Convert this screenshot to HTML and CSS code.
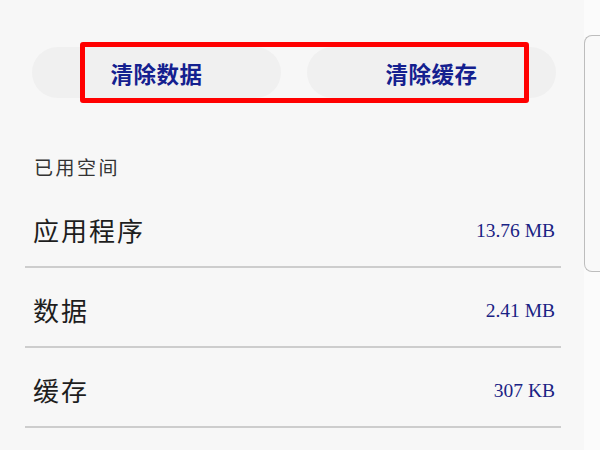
FILE: index.html
```html
<!DOCTYPE html>
<html lang="zh-CN">
<head>
<meta charset="utf-8">
<title>存储</title>
<link rel="stylesheet" href="styles.css">
</head>
<body>
<div class="screen">
  <main class="content">
    <div class="actions">
      <button class="pill">清除数据</button>
      <button class="pill">清除缓存</button>
      <div class="highlight"></div>
    </div>
    <div class="section-title">已用空间</div>
    <ul class="list">
      <li class="row"><span class="label">应用程序</span><span class="value">13.76 MB</span></li>
      <li class="row"><span class="label">数据</span><span class="value">2.41 MB</span></li>
      <li class="row"><span class="label">缓存</span><span class="value">307 KB</span></li>
    </ul>
  </main>
  <aside class="edge"><div class="edge-panel"></div></aside>
</div>
</body>
</html>
```
FILE: styles.css
```css
html, body {
  margin: 0;
  padding: 0;
  background: #f7f7f7;
}
.screen {
  width: 600px;
  height: 450px;
  overflow: hidden;
  display: flex;
  font-family: "Noto Sans CJK SC", sans-serif;
}
.content {
  width: 584px;
  flex: none;
}
.actions {
  position: relative;
  display: flex;
  gap: 26px;
  padding: 47px 0 0 32px;
}
.pill {
  width: 249px;
  height: 51px;
  border: none;
  border-radius: 26px;
  background: #f0f0f0;
  color: #14208f;
  font-family: "Noto Sans CJK SC", sans-serif;
  font-weight: 700;
  font-size: 22.5px;
  padding: 0;
  letter-spacing: 0.5px;
}
.highlight {
  position: absolute;
  left: 80px;
  top: 42px;
  width: 449px;
  height: 61px;
  box-sizing: border-box;
  border: 5px solid #ff0000;
  border-radius: 3px;
}
.section-title {
  margin: 55px 0 0 34px;
  height: 28px;
  line-height: 28px;
  font-size: 19px;
  color: #333;
  letter-spacing: 2.5px;
}
.list {
  list-style: none;
  margin: 7px 0 0 25px;
  padding: 0;
  width: 536px;
}
.row {
  height: 80px;
  box-sizing: border-box;
  border-bottom: 2px solid #cdcdcd;
  padding: 4px 6px 0 8px;
  display: flex;
  align-items: center;
  justify-content: space-between;
}
.label {
  font-size: 26px;
  color: #1e1e1e;
  letter-spacing: 2px;
}
.value {
  font-family: "Liberation Serif", serif;
  font-size: 19.5px;
  color: #1a2384;
  padding-top: 3px;
}
.edge {
  flex: 1;
  background: #fbfbfb;
}
.edge-panel {
  margin-top: 35px;
  height: 235px;
  border: 1px solid #bdbdbd;
  border-right: none;
  border-radius: 8px 0 0 8px;
  background: #f9f9f9;
}
```
